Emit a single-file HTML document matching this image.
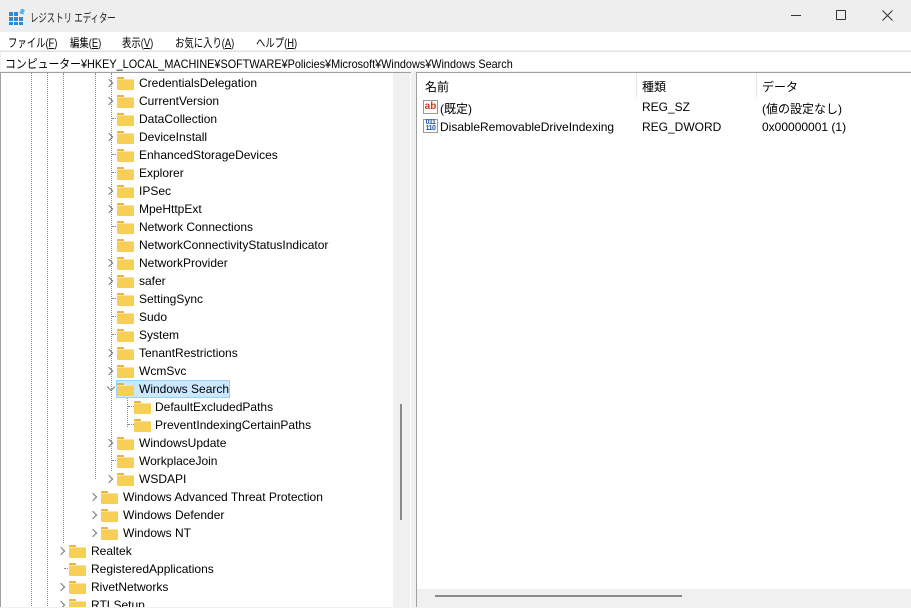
<!DOCTYPE html>
<html><head><meta charset="utf-8"><style>
*{margin:0;padding:0;box-sizing:border-box}
body{width:911px;height:607px;overflow:hidden;background:#f0f0f0;font-family:"Liberation Sans","Noto Sans CJK JP",sans-serif;font-size:12px;color:#000;position:relative}
.abs{position:absolute}
.title{left:0;top:0;width:911px;height:32px;background:#eeeeee}
.menu{left:0;top:32px;width:911px;height:18px;background:#fff}
.menu span{position:absolute;top:2px;transform:scaleX(0.78);transform-origin:0 0;white-space:nowrap}
.addr{left:1px;top:51px;width:910px;height:20px;background:#fff;border-top:1px solid #e0e0e0;padding:3px 0 0 4px;font-size:12px}
.addr span{display:inline-block;transform:scaleX(0.905);transform-origin:0 0;white-space:nowrap}
.left{left:0;top:72px;width:411px;height:535px;background:#fff;border-top:1px solid #a0a0a0;border-left:1px solid #a0a0a0;overflow:hidden}
.right{left:416px;top:72px;width:495px;height:535px;background:#fff;border-top:1px solid #a0a0a0;border-left:1px solid #a0a0a0}
.row{position:absolute;height:18px;font-size:12px;line-height:18px;white-space:nowrap}
.fold{position:absolute;width:17px;height:13px;top:3px}
.fold:before{content:"";position:absolute;left:0;top:0;width:7px;height:3px;background:#e8b43a;border-radius:1px 1px 0 0}
.fold:after{content:"";position:absolute;left:0;top:2px;width:17px;height:11px;background:#f7cf55;border-radius:0 1px 1px 1px;box-shadow:inset 0 1px 0 #fbe39a}
.chev{position:absolute;width:6px;height:6px;border-right:1px solid #777;border-bottom:1px solid #777;transform:rotate(-45deg);top:6px}
.chev.dn{transform:rotate(45deg);top:4px}
.vl{position:absolute;width:0;border-left:1px dotted #888}
.hl{position:absolute;height:0;border-top:1px dotted #888}
</style></head><body>
<div class="abs title">
 <svg class="abs" style="left:9px;top:9px" width="16" height="16" viewBox="0 0 16 16">
  <g fill="#2b8bd6"><rect x="0" y="3" width="4" height="4"/><rect x="5" y="3" width="4" height="4"/><rect x="0" y="8" width="4" height="4"/><rect x="5" y="8" width="4" height="4"/><rect x="10" y="8" width="4" height="4"/><rect x="0" y="13" width="4" height="3"/><rect x="5" y="13" width="4" height="3"/><rect x="10" y="13" width="4" height="3"/></g>
  <rect x="11" y="0" width="4" height="5" fill="#5cb3ee" transform="rotate(20 13 3)"/>
 </svg>
 <span class="abs" style="left:30px;top:9px;font-size:12px;color:#222;transform:scaleX(0.7);transform-origin:0 0;white-space:nowrap">レジストリ エディター</span>
 <div class="abs" style="left:791px;top:15px;width:10px;height:1px;background:#333"></div>
 <div class="abs" style="left:836px;top:10px;width:10px;height:10px;border:1px solid #333;border-radius:1px"></div>
 <svg class="abs" style="left:882px;top:10px" width="11" height="11"><path d="M0.5 0.5L10.5 10.5M10.5 0.5L0.5 10.5" stroke="#333" stroke-width="1"/></svg>
</div>
<div class="abs menu">
 <span style="left:8px">ファイル(<u>F</u>)</span>
 <span style="left:70px">編集(<u>E</u>)</span>
 <span style="left:122px">表示(<u>V</u>)</span>
 <span style="left:175px">お気に入り(<u>A</u>)</span>
 <span style="left:256px">ヘルプ(<u>H</u>)</span>
</div>
<div class="abs addr"><span>コンピューター¥HKEY_LOCAL_MACHINE¥SOFTWARE¥Policies¥Microsoft¥Windows¥Windows Search</span></div>
<div class="abs left">
 <div class="vl" style="left:30px;top:0;height:535px"></div>
 <div class="vl" style="left:46px;top:0;height:535px"></div>
 <div class="vl" style="left:62px;top:0;height:470px"></div>
 <div class="vl" style="left:94px;top:0;height:406px"></div>
 <div class="vl" style="left:110px;top:0;height:398px"></div>
 <div class="vl" style="left:126px;top:318px;height:36px"></div>
 <div class="hl" style="left:111px;top:45px;width:6px"></div>
 <div class="hl" style="left:111px;top:81px;width:6px"></div>
 <div class="hl" style="left:111px;top:99px;width:6px"></div>
 <div class="hl" style="left:111px;top:153px;width:6px"></div>
 <div class="hl" style="left:111px;top:225px;width:6px"></div>
 <div class="hl" style="left:111px;top:243px;width:6px"></div>
 <div class="hl" style="left:111px;top:261px;width:6px"></div>
 <div class="hl" style="left:111px;top:387px;width:6px"></div>
 <div class="hl" style="left:127px;top:333px;width:6px"></div>
 <div class="hl" style="left:127px;top:351px;width:6px"></div>
 <div class="hl" style="left:63px;top:495px;width:6px"></div>
</div>
<div id="tree" class="abs" style="left:0;top:73px;width:393px;height:534px;overflow:hidden"></div>
<div class="abs" style="left:393px;top:73px;width:17px;height:534px;background:#f0f0f0"></div>
<div class="abs" style="left:400px;top:404px;width:2px;height:116px;background:#8a8a8a"></div>
<div class="abs right">
 <div class="abs" style="left:0;top:0;width:494px;height:24px;background:#fff"></div>
 <div class="abs" style="left:219px;top:0;width:1px;height:24px;background:#e5e5e5"></div>
 <div class="abs" style="left:339px;top:0;width:1px;height:24px;background:#e5e5e5"></div>
 <span class="abs" style="left:8px;top:5px">名前</span>
 <span class="abs" style="left:225px;top:5px">種類</span>
 <span class="abs" style="left:345px;top:5px">データ</span>
 <div class="abs" style="left:6px;top:27px;width:15px;height:14px;border:1px solid #999;background:#fff;color:#d0381c;font-size:10px;font-weight:bold;line-height:11px;text-align:center">ab</div>
 <span class="abs" style="left:23px;top:27px">(既定)</span>
 <span class="abs" style="left:225px;top:27px">REG_SZ</span>
 <span class="abs" style="left:345px;top:27px">(値の設定なし)</span>
 <div class="abs" style="left:6px;top:46px;width:15px;height:14px;border:1px solid #999;background:#fff;color:#1f4fa8;font-size:7px;font-weight:bold;line-height:6px;text-align:center;letter-spacing:-0.5px">011<br>110</div>
 <span class="abs" style="left:23px;top:47px">DisableRemovableDriveIndexing</span>
 <span class="abs" style="left:225px;top:47px">REG_DWORD</span>
 <span class="abs" style="left:345px;top:47px">0x00000001 (1)</span>
 <div class="abs" style="left:0;top:516px;width:494px;height:19px;background:#f0f0f0"></div>
 <div class="abs" style="left:18px;top:522px;width:247px;height:2px;background:#8a8a8a"></div>
</div>
<script>
var rows=[
[0,"CredentialsDelegation",3,1],[1,"CurrentVersion",3,1],[2,"DataCollection",3,0],[3,"DeviceInstall",3,1],
[4,"EnhancedStorageDevices",3,0],[5,"Explorer",3,0],[6,"IPSec",3,1],[7,"MpeHttpExt",3,1],
[8,"Network Connections",3,0],[9,"NetworkConnectivityStatusIndicator",3,0],[10,"NetworkProvider",3,1],
[11,"safer",3,1],[12,"SettingSync",3,0],[13,"Sudo",3,0],[14,"System",3,0],[15,"TenantRestrictions",3,1],
[16,"WcmSvc",3,1],[17,"Windows Search",3,2],[18,"DefaultExcludedPaths",4,0],[19,"PreventIndexingCertainPaths",4,0],
[20,"WindowsUpdate",3,1],[21,"WorkplaceJoin",3,0],[22,"WSDAPI",3,1],
[23,"Windows Advanced Threat Protection",2,1],[24,"Windows Defender",2,1],[25,"Windows NT",2,1],
[26,"Realtek",1,1],[27,"RegisteredApplications",1,0],[28,"RivetNetworks",1,1],[29,"RTLSetup",1,1]];
var fx={1:69,2:101,3:117,4:134},h="";
rows.forEach(function(r){
 var y=1+r[0]*18,f=fx[r[2]];
 if(r[3]==1)h+='<div class="chev" style="left:'+(f-11)+'px;top:'+(y+6)+'px"></div>';
 if(r[3]==2)h+='<div class="chev dn" style="left:'+(f-9)+'px;top:'+(y+4)+'px"></div>';
 if(r[3]==2)h+='<div class="abs" style="left:'+(f-1)+'px;top:'+y+'px;width:114px;height:18px;background:#cce8ff;border:1px solid #99d1ff"></div>';
 h+='<div class="row" style="left:'+f+'px;top:'+y+'px;width:300px"><div class="fold" style="left:0"></div><span style="position:absolute;left:'+(f==134?21:22)+'px">'+r[1]+'</span></div>';
});
document.getElementById("tree").innerHTML=h;
</script>
</body></html>
